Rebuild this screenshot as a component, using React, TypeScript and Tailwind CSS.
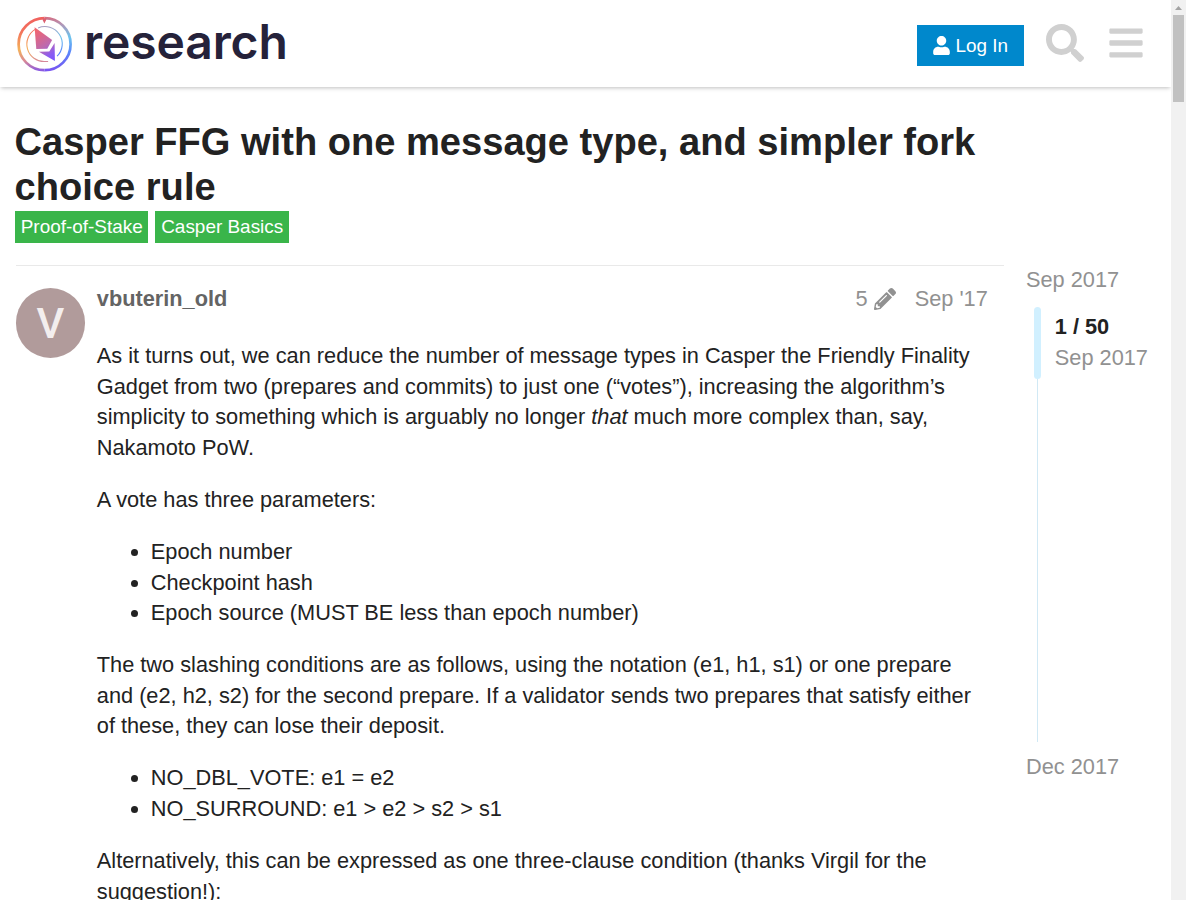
import React from "react";
import { FaSearch, FaBars, FaPencilAlt } from "react-icons/fa";

function Logo() {
  return (
    <a className="flex items-center">
      <svg width="56" height="57" viewBox="0 -1 56 57" className="shrink-0">
        <defs>
          <linearGradient id="ringLeft" x1="28" y1="0" x2="28" y2="56" gradientUnits="userSpaceOnUse">
            <stop offset="0" stopColor="#f0605f" />
            <stop offset="0.28" stopColor="#f3735c" />
            <stop offset="0.6" stopColor="#f4b25a" />
            <stop offset="0.8" stopColor="#d98a96" />
            <stop offset="1" stopColor="#7d52ee" />
          </linearGradient>
          <linearGradient id="ringRight" x1="28" y1="0" x2="28" y2="56" gradientUnits="userSpaceOnUse">
            <stop offset="0" stopColor="#d9697d" />
            <stop offset="0.15" stopColor="#b097b8" />
            <stop offset="0.38" stopColor="#6cc4ee" />
            <stop offset="0.65" stopColor="#5a85fb" />
            <stop offset="1" stopColor="#7a50f0" />
          </linearGradient>
          <linearGradient id="gem" x1="18" y1="16" x2="38" y2="44" gradientUnits="userSpaceOnUse">
            <stop offset="0" stopColor="#ef6572" />
            <stop offset="0.5" stopColor="#bd6aae" />
            <stop offset="0.8" stopColor="#8a5cf2" />
            <stop offset="1" stopColor="#7a55ff" />
          </linearGradient>
        </defs>
        <g transform="translate(-0.4 0.2)">
          <path d="M28 2a26 26 0 0 0 0 52" fill="none" stroke="url(#ringLeft)" strokeWidth="2.7" />
          <path d="M28 2a26 26 0 0 1 0 52" fill="none" stroke="url(#ringRight)" strokeWidth="2.7" />
          <path d="M26 2h4l-.7 2.2-1.500 3.200-1.500-3.200z" fill="#dc6070" />
          <path d="M18.600 13.200A17.300 17.300 0 0 0 28 45.300h3.500" fill="none" stroke="url(#ringLeft)" strokeWidth="1.1" />
          <path d="M21.500 11.800A17.300 17.300 0 0 1 40.500 40" fill="none" stroke="url(#ringRight)" strokeWidth="1.1" />
          <path d="M18 11 35.500 23.800 30.700 32.500 19.700 32.800z" fill="url(#gem)" />
          <path d="M22.300 35.600 32.700 35.400 38 26.700 38.300 44.900z" fill="url(#gem)" />
        </g>
      </svg>
      <span className="ml-[11px] pb-[3px] font-['Inter',sans-serif] text-[48px] leading-[56px] font-semibold tracking-[-0.1px] text-[#25223a]">
        research
      </span>
    </a>
  );
}

function Header() {
  return (
    <header className="relative z-10 flex h-[87px] shrink-0 items-center justify-between bg-white pr-[28px] pl-[17px] shadow-[0_2px_4px_-1px_rgba(0,0,0,0.25)]">
      <Logo />
      <div className="flex items-center pb-px">
        <button className="mt-[5px] flex h-[41px] w-[107px] items-center bg-[#0088cc] pl-[16px] text-[18.9px] text-white">
          <svg width="17" height="19" viewBox="0 0 448 512" className="mr-[5.600px] shrink-0" fill="#fff">
            <path d="M224 256c70.7 0 128-57.3 128-128S294.7 0 224 0 96 57.3 96 128s57.3 128 128 128zm89.6 32h-16.7c-22.2 10.2-46.9 16-72.9 16s-50.6-5.8-72.9-16h-16.7C60.2 288 0 348.2 0 422.4V464c0 26.500 21.500 48 48 48h352c26.500 0 48-21.500 48-48v-41.600c0-74.200-60.200-134.400-134.400-134.400z" />
          </svg>
          <span className="pt-px whitespace-nowrap">Log In</span>
        </button>
        <FaSearch className="ml-[22px] size-[38px] text-[#d0d0d0]" />
        <FaBars className="ml-[25px] h-[38px] w-[34px] text-[#d0d0d0]" />
      </div>
    </header>
  );
}

function Tag({ children }: { children: React.ReactNode }) {
  return <span className="flex h-8 items-center bg-[#3ab54a] px-[5.7px] text-[18.95px] text-white">{children}</span>;
}

function Post() {
  return (
    <article className="ml-[16px] flex w-[988px] border-t border-[#e9e9e9] pt-[22px]">
      <div className="flex h-[70px] w-[69px] shrink-0 items-center justify-center rounded-full bg-[#b19b9b] pt-px font-['Roboto',sans-serif] text-[43px] leading-none font-medium text-[#f3eeee]">
        V
      </div>
      <div className="ml-[11.800px] w-[891px]">
        <div className="flex h-[22px] items-center text-[21.75px] leading-[22px] text-[#919191]">
          <span className="font-bold text-[#646464]">vbuterin_old</span>
          <span className="ml-auto">5</span>
          <FaPencilAlt className="ml-[6px] size-[22px]" />
          <span className="ml-[19px]">Sep '17</span>
        </div>
        <div className="mt-[31px] w-[891px] text-[21.75px] leading-[30.62px] text-[#222] [&>p]:mb-[21.4px] [&>ul]:mb-[21.4px] [&>ul]:list-disc [&>ul]:pl-[54px]">
          <p>
            As it turns out, we can reduce the number of message types in Casper the Friendly Finality
            <br />
            Gadget from two (prepares and commits) to just one (“votes”), increasing the algorithm’s
            <br />
            simplicity to something which is arguably no longer <em>that</em> much more complex than, say,
            <br />
            Nakamoto PoW.
          </p>
          <p>A vote has three parameters:</p>
          <ul>
            <li>Epoch number</li>
            <li>Checkpoint hash</li>
            <li>Epoch source (MUST BE less than epoch number)</li>
          </ul>
          <p>
            The two slashing conditions are as follows, using the notation (e1, h1, s1) or one prepare
            <br />
            and (e2, h2, s2) for the second prepare. If a validator sends two prepares that satisfy either
            <br />
            of these, they can lose their deposit.
          </p>
          <ul>
            <li>NO_DBL_VOTE: e1 = e2</li>
            <li>NO_SURROUND: e1 &gt; e2 &gt; s2 &gt; s1</li>
          </ul>
          <p>
            Alternatively, this can be expressed as one three-clause condition (thanks Virgil for the
            <br />
            suggestion!):
          </p>
        </div>
      </div>
    </article>
  );
}

function Timeline() {
  return (
    <aside className="ml-[22px] flex flex-col text-[21.75px] leading-[30px] whitespace-nowrap text-[#919191]">
      <div>Sep 2017</div>
      <div className="mt-[12px] ml-[8px] flex h-[435px]">
        <div className="flex w-[7px] flex-col">
          <div className="h-[72px] rounded-[4px] bg-[#d1f0ff]" />
          <div className="ml-[3px] w-px flex-1 bg-[#d1e9f5]" />
        </div>
        <div className="ml-[13.800px] pt-[5px]">
          <div className="font-bold text-[#222]">1 / 50</div>
          <div className="mt-px">Sep 2017</div>
        </div>
      </div>
      <div className="mt-[10px]">Dec 2017</div>
    </aside>
  );
}

function Scrollbar() {
  return (
    <div className="flex w-[15px] shrink-0 flex-col items-center bg-[#f1f1f1]">
      <svg width="15" height="15" viewBox="0 0 15 15">
        <path d="M4 10h7L7.500 6z" fill="#a3a3a3" />
      </svg>
      <div className="h-[87px] w-[11px] bg-[#c1c1c1]" />
    </div>
  );
}

export default function App() {
  return (
    <div className="flex h-[900px] w-[1186px] overflow-hidden bg-white font-['Liberation_Sans',Arial,sans-serif]">
      <div className="flex h-[900px] w-[1171px] flex-col overflow-hidden">
        <Header />
        <main className="pt-[33px]">
          <h1 className="ml-[14.600px] text-[38.1px] leading-[45px] font-bold text-[#222]">
            Casper FFG with one message type, and simpler fork
            <br />
            choice rule
          </h1>
          <div className="mt-px ml-[15px] flex gap-[7px]">
            <Tag>Proof-of-Stake</Tag>
            <Tag>Casper Basics</Tag>
          </div>
          <div className="mt-[22px] flex">
            <Post />
            <Timeline />
          </div>
        </main>
      </div>
      <Scrollbar />
    </div>
  );
}
